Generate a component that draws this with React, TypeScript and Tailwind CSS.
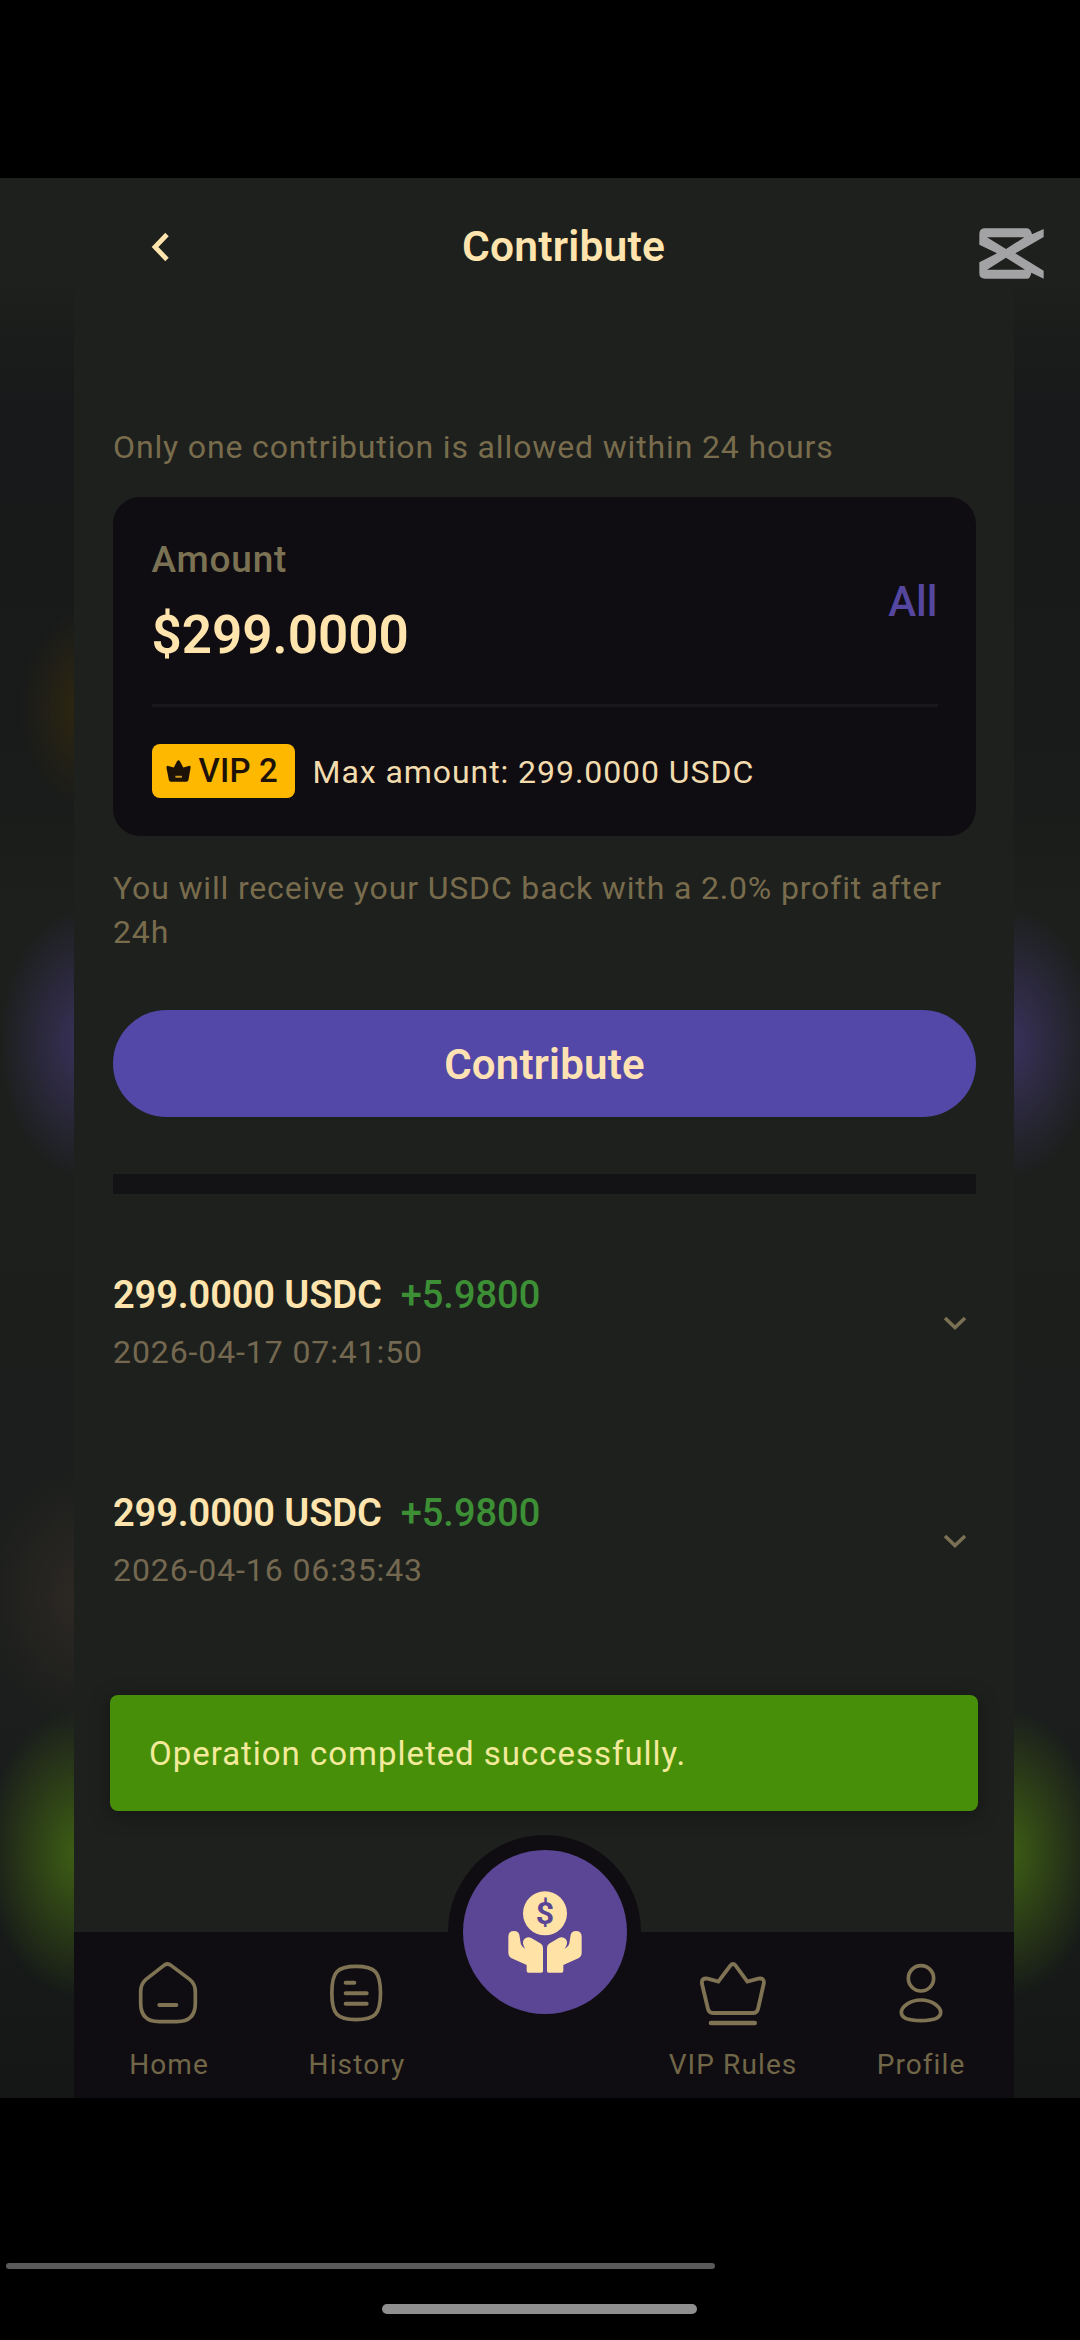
import type { ReactNode } from "react";

function BackIcon() {
  return (
    <svg className="h-8 w-5" viewBox="0 0 20 32" fill="none" stroke="#ffe5ad" strokeWidth="4.8">
      <path d="M17 3.5 5 16l12 12.5" />
    </svg>
  );
}

function ChevronIcon() {
  return (
    <svg className="h-4 w-6" viewBox="0 0 24 16" fill="none" stroke="#7a7054" strokeWidth="3.6">
      <path d="M2 3l10 9.5L22 3" />
    </svg>
  );
}

function BadgeCrown() {
  return (
    <svg className="h-[22px] w-[25px]" viewBox="76 90 75 67">
      <path
        fill="#1d1208"
        d="M77 114Q76 105 85 109L99 113L109 94Q113 87 118 94L128 113L142 109Q152 105 150 115L144 150Q143 156 137 156H90Q85 156 84 150Z"
      />
      <path d="M104 141H124" stroke="#cf9a20" strokeWidth="6" />
    </svg>
  );
}

function EditorMark() {
  return (
    <svg className="h-[51px] w-[65px]" viewBox="56 84 195 153">
      <path
        fill="#a3a3a5"
        fillRule="evenodd"
        d="M57 102Q57 85 74 85H200Q211 86 215 103L250 87V111L165 160L250 212V236L213 218Q210 236 200 236H74Q57 236 57 220V187L110 160L57 134ZM80 112L137 147L192 112ZM80 209H194L137 173Z"
      />
    </svg>
  );
}

function HomeIcon() {
  return (
    <svg className="h-[66px] w-[60px]" viewBox="85 60 180 198" fill="none" stroke="#7f7353" strokeWidth="11" strokeLinecap="round">
      <path d="M162 77Q173 67 185 77L240 118Q257 132 257 155V190Q257 245 202 245H148Q93 245 93 190V155Q93 132 109 118Z" />
      <path d="M149 195H200" strokeWidth="12" />
    </svg>
  );
}

function HistoryIcon() {
  return (
    <svg className="h-[66px] w-[60px]" viewBox="648 60 180 198" fill="none" stroke="#7f7353" strokeWidth="11" strokeLinecap="round">
      <path d="M738 79C795 79 811.500 95 811.500 159C811.500 223 795 239 738 239C682 239 665.500 223 665.500 159C665.500 95 682 79 738 79Z" />
      <path d="M707 128H733M707 160H770M707 191H770" strokeWidth="12" />
    </svg>
  );
}

function CrownIcon() {
  return (
    <svg className="h-[66px] w-[70px]" viewBox="140 60 210 198" fill="none" stroke="#7f7353" strokeWidth="11.5" strokeLinecap="round">
      <path d="M240 77Q248 67 256 77L291 125L324 116Q344 113 340 132L323 207Q320 219 308 219H188Q176 219 173 207L155 132Q152 113 172 116L204 125Z" />
      <path d="M182 249H313" strokeWidth="14" />
    </svg>
  );
}

function ProfileIcon() {
  return (
    <svg className="h-[66px] w-[60px]" viewBox="717 60 180 198" fill="none" stroke="#7f7353" strokeWidth="11">
      <circle cx="810" cy="115" r="38" />
      <path d="M810 180C845 180 869 202 869 217C869 235 845 242 810 242C775 242 751 235 751 217C751 202 775 180 810 180Z" />
    </svg>
  );
}

const HAND =
  "M233 350Q233 333 250 333Q266 333 267 350L270 370Q272 380 284 386Q271 368 281 357Q290 348 302 354L331 371Q337 375 337 384V453Q337 458 332 458H293Q288 458 288 452V435L243 415Q233 409 233 398Z";

function DonateIcon() {
  return (
    <svg className="h-[84px] w-[74px]" viewBox="232 210 222 252">
      <circle cx="343" cy="280" r="66" fill="#ffe2a6" />
      <text x="343" y="313" textAnchor="middle" fontFamily="Roboto" fontWeight="700" fontSize="96" fill="#5a4694">
        $
      </text>
      <path d={HAND} fill="#ffe2a6" />
      <path d={HAND} fill="#ffe2a6" transform="translate(686 0) scale(-1 1)" />
    </svg>
  );
}

function NavItem({ label, children }: { label: string; children: ReactNode }) {
  return (
    <div className="flex w-[188px] flex-col items-center pt-7">
      {children}
      <span className="mt-5 pl-[2px] text-[28px] leading-[38px] tracking-[1.1px] text-[#716748]">{label}</span>
    </div>
  );
}

function HistoryRow({ amount, profit, date }: { amount: string; profit: string; date: string }) {
  return (
    <div className="flex h-[218px] items-center justify-between border-b-2 border-[#1e2120] pt-[3px] pr-[9px]">
      <div>
        <div className="flex gap-[19px] text-[38px] leading-[46px]">
          <span className="font-semibold tracking-[-0.1px] text-[#ffe5ad]">{amount}</span>
          <span className="font-medium text-[#3d8f36]">{profit}</span>
        </div>
        <div className="mt-3 text-[32px] leading-[44px] tracking-[0.9px] text-[#746950]">{date}</div>
      </div>
      <ChevronIcon />
    </div>
  );
}

export default function App() {
  return (
    <div className="flex h-[2340px] w-[1080px] flex-col overflow-hidden bg-black pt-[178px] font-['Roboto',sans-serif]">
      <div className="relative h-[1920px] shrink-0 overflow-hidden bg-[linear-gradient(to_bottom,#1e201d_0%,#1e201d_5%,#17191a_12%,#191b1a_30%,#1d1f1d_38%,#1b1e1c_80%,#141716_100%)]">
        <div className="absolute top-[430px] left-[20px] h-[200px] w-[140px] bg-[radial-gradient(closest-side,#30280f,transparent)]" />
        <div className="absolute top-[730px] left-[0px] h-[270px] w-[170px] bg-[radial-gradient(closest-side,#39325c,transparent)]" />
        <div className="absolute top-[730px] left-[925px] h-[270px] w-[170px] bg-[radial-gradient(closest-side,#39325c,transparent)]" />
        <div className="absolute top-[1290px] -left-[20px] h-[260px] w-[220px] bg-[radial-gradient(closest-side,#2e2925,transparent)]" />
        <div className="absolute top-[1530px] -left-[15px] h-[290px] w-[190px] bg-[radial-gradient(closest-side,#3f6014,transparent)]" />
        <div className="absolute top-[1530px] left-[910px] h-[290px] w-[190px] bg-[radial-gradient(closest-side,#3f6014,transparent)]" />

        <div className="relative mr-[66px] ml-[74px] flex h-full flex-col bg-[#1e201d]">
          <header className="flex h-[137px] shrink-0 items-center pl-[76px]">
            <BackIcon />
            <h1 className="ml-[292px] text-[42.5px] leading-[60px] font-semibold tracking-[0.2px] text-[#ffe5ad]">Contribute</h1>
          </header>

          <main className="mr-[38px] ml-[39px] flex flex-col">
            <p className="mt-[110px] text-[32px] leading-[44px] tracking-[0.86px] text-[#786c4d]">
              Only one contribution is allowed within 24 hours
            </p>

            <section className="mt-7 h-[339px] rounded-[27px] bg-[#100d12] px-[38.5px] pt-[41px]">
              <div className="flex items-center justify-between">
                <div>
                  <div className="text-[37px] leading-[44px] font-medium tracking-[0.8px] text-[#7b7254]">Amount</div>
                  <div className="mt-[21px] text-[53px] leading-[64px] font-semibold text-[#ffe5ad]">$299.0000</div>
                </div>
                <span className="mb-0.5 text-[42px] leading-[50px] font-medium text-[#5547a0]">All</span>
              </div>
              <div className="mt-[37px] h-[3px] bg-[#19181b]" />
              <div className="mt-[37px] flex items-center">
                <div className="flex h-[54px] w-[143px] items-center rounded-lg bg-[#ffb800] pl-[14px]">
                  <BadgeCrown />
                  <span className="-mt-px ml-[8px] text-[33px] leading-[50px] font-medium tracking-[0.15px] whitespace-nowrap text-[#1d1208]">
                    VIP 2
                  </span>
                </div>
                <span className="mt-[2px] ml-[18px] text-[32px] leading-[44px] tracking-[0.94px] text-[#f2dcae]">
                  Max amount: 299.0000 USDC
                </span>
              </div>
            </section>

            <p className="mt-[31px] text-[32px] leading-[43.5px] tracking-[0.84px] text-[#786c4d]">
              You will receive your USDC back with a 2.0% profit after 24h
            </p>

            <button className="mt-14 h-[107px] rounded-full bg-[#5347a7] pt-px text-[42px] font-semibold tracking-[0.2px] text-[#ffe2b4]">
              Contribute
            </button>

            <div className="mt-[57px] h-5 bg-[#131315]" />

            <div className="mt-[19px]">
              <HistoryRow amount="299.0000 USDC" profit="+5.9800" date="2026-04-17 07:41:50" />
              <HistoryRow amount="299.0000 USDC" profit="+5.9800" date="2026-04-16 06:35:43" />
            </div>
          </main>

          <div
            role="status"
            className="absolute top-[1517px] right-[36px] left-[36px] flex h-[116px] items-center rounded-lg bg-[#478f09] pt-px pl-[39px] text-[33px] tracking-[0.97px] text-[#f3ea9c] shadow-[0_4px_20px_rgba(0,0,0,0.35)]"
          >
            Operation completed successfully.
          </div>

          <nav className="relative mt-auto flex h-[166px] shrink-0 bg-[#100d12]">
            <NavItem label="Home">
              <HomeIcon />
            </NavItem>
            <NavItem label="History">
              <HistoryIcon />
            </NavItem>
            <div className="w-[188px]" />
            <NavItem label="VIP Rules">
              <CrownIcon />
            </NavItem>
            <NavItem label="Profile">
              <ProfileIcon />
            </NavItem>
            <div className="absolute -top-[97px] left-[374px] flex size-[193px] items-center justify-center rounded-full bg-[#100d12]">
              <div className="flex size-[164px] items-center justify-center rounded-full bg-[#5a4694]">
                <DonateIcon />
              </div>
            </div>
          </nav>
        </div>

        <div className="absolute top-[50px] left-[979px]">
          <EditorMark />
        </div>
      </div>

      <div className="mt-[165px] ml-1.5 h-1.5 w-[709px] shrink-0 rounded-full bg-[#5a5a5a]" />
      <div className="mt-[35px] ml-[382px] h-2.5 w-[315px] shrink-0 rounded-full bg-[#8f8f8f]" />
    </div>
  );
}
